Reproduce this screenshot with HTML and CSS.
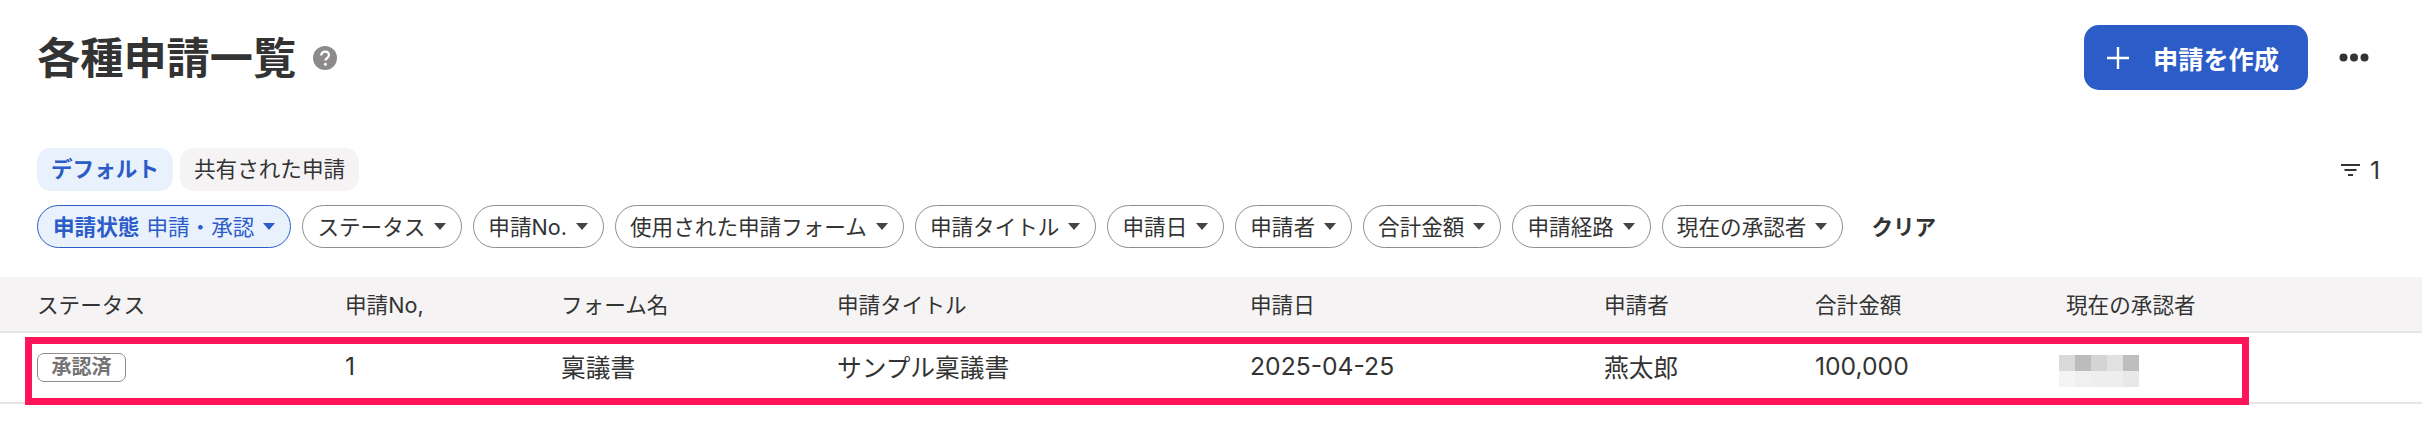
FILE: index.html
```html
<!DOCTYPE html>
<html lang="ja">
<head>
<meta charset="utf-8">
<title>各種申請一覧</title>
<link rel="stylesheet" href="styles.css">
</head>
<body>
<main class="page">
  <header class="top">
    <div class="title-wrap">
      <h1 class="title">各種申請一覧</h1>
      <svg class="help" viewBox="0 0 24 24" aria-hidden="true">
        <circle cx="12" cy="12" r="12" fill="#8c8a8b"/>
        <path d="M8.2 9.6c0-2.3 1.6-3.9 3.9-3.9 2.2 0 3.8 1.4 3.8 3.4 0 1.6-.8 2.4-2 3.2-1 .7-1.4 1.1-1.4 2.2" fill="none" stroke="#fff" stroke-width="2.3"/>
        <circle cx="12.4" cy="18.2" r="1.5" fill="#fff"/>
      </svg>
    </div>
    <div class="actions">
      <button class="create" type="button">
        <svg class="plus" viewBox="0 0 22 22" aria-hidden="true"><path d="M11 0v22M0 11h22" stroke="#fff" stroke-width="2.4"/></svg>
        <span>申請を作成</span>
      </button>
      <svg class="more" viewBox="0 0 30 9" aria-hidden="true">
        <circle cx="4.5" cy="4.5" r="4" fill="#333"/><circle cx="15" cy="4.5" r="4" fill="#333"/><circle cx="25.5" cy="4.5" r="4" fill="#333"/>
      </svg>
    </div>
  </header>

  <div class="tab-row">
    <div class="tabs">
      <span class="tab tab-active">デフォルト</span>
      <span class="tab">共有された申請</span>
    </div>
    <div class="count">
      <svg class="sort" viewBox="0 0 19 12" aria-hidden="true"><path d="M0 1h19M3.5 6h12M7 11h5" stroke="#333" stroke-width="2"/></svg>
      <span>1</span>
    </div>
  </div>

  <div class="filters">
    <span class="pill pill-active"><b>申請状態</b><span>申請・承認</span><i class="caret"></i></span>
    <span class="pill">ステータス<i class="caret"></i></span>
    <span class="pill">申請No.<i class="caret"></i></span>
    <span class="pill">使用された申請フォーム<i class="caret"></i></span>
    <span class="pill">申請タイトル<i class="caret"></i></span>
    <span class="pill">申請日<i class="caret"></i></span>
    <span class="pill">申請者<i class="caret"></i></span>
    <span class="pill">合計金額<i class="caret"></i></span>
    <span class="pill">申請経路<i class="caret"></i></span>
    <span class="pill">現在の承認者<i class="caret"></i></span>
    <span class="clear">クリア</span>
  </div>

  <section class="table">
    <div class="row head">
      <span>ステータス</span><span>申請No,</span><span>フォーム名</span><span>申請タイトル</span><span>申請日</span><span>申請者</span><span>合計金額</span><span>現在の承認者</span>
    </div>
    <div class="row body">
      <span><em class="badge">承認済</em></span><span>1</span><span>稟議書</span><span>サンプル稟議書</span><span>2025-04-25</span><span>燕太郎</span><span>100,000</span>
      <span class="mosaic"><i class="a"></i><i class="b"></i><i class="c"></i><i class="d"></i><i class="e"></i><i class="f"></i><i class="g"></i><i class="h"></i><i class="j"></i><i class="k"></i></span>
    </div>
    <div class="highlight"></div>
  </section>
</main>
</body>
</html>
```
FILE: styles.css
```css
* { box-sizing: border-box; }
html, body { margin: 0; background: #fff; }
body {
  font-family: Inter, "Noto Sans CJK JP", sans-serif;
  font-size: 21.6px;
  color: #333;
  width: 2422px;
  height: 430px;
  overflow: hidden;
}
.page { padding-top: 25px; }

.top {
  display: flex;
  justify-content: space-between;
  align-items: center;
  height: 65px;
  padding: 0 53px 0 37px;
}
.title-wrap { display: flex; align-items: center; gap: 17px; }
.title { margin: 0; font-size: 43.2px; line-height: 56px; font-weight: 700; color: #333; }
.help { width: 24px; height: 24px; }
.actions { display: flex; align-items: center; gap: 31px; }
.create {
  display: flex;
  align-items: center;
  gap: 24px;
  width: 224px;
  height: 65px;
  padding: 0 0 0 23px;
  border: 0;
  border-radius: 15px;
  background: #2b5cc8;
  color: #fff;
  font: 700 25.2px Inter, "Noto Sans CJK JP", sans-serif;
}
.plus { width: 22px; height: 22px; }
.more { width: 30px; height: 9px; }

.tab-row {
  display: flex;
  justify-content: space-between;
  align-items: center;
  margin-top: 58px;
  padding: 0 42px 0 37px;
}
.tabs { display: flex; gap: 7px; }
.tab {
  height: 43px;
  line-height: 43px;
  padding: 0 14px;
  border-radius: 14px;
  background: #f5f3f4;
}
.tab-active { background: #e9f1fd; color: #2b5cc8; font-weight: 700; }
.count { display: flex; align-items: center; gap: 10px; font-size: 24.7px; }
.sort { width: 19px; height: 12px; }

.filters {
  display: flex;
  align-items: center;
  gap: 11px;
  margin-top: 14px;
  padding-left: 37px;
}
.pill {
  display: flex;
  align-items: center;
  height: 43px;
  padding: 0 15px 2px 14px;
  border: 1px solid #8f8d8e;
  border-radius: 22px;
  white-space: nowrap;
}
.pill-active {
  gap: 7px;
  padding-left: 15px;
  border-color: #2b5cc8;
  background: #e9f1fd;
  color: #2b5cc8;
}
.pill-active b { font-weight: 700; }
.pill-active .caret { margin-left: 2px; border-top-color: #2b5cc8; }
.caret {
  width: 0;
  height: 0;
  margin: 2px 0 0 9px;
  border-left: 6px solid transparent;
  border-right: 6px solid transparent;
  border-top: 7px solid #444;
}
.clear { margin-left: 17px; padding-bottom: 2px; font-weight: 700; }

.table { position: relative; margin-top: 29px; }
.row {
  display: grid;
  grid-template-columns: 308px 216px 276px 413px 354px 211px 251px 1fr;
  align-items: center;
  padding-left: 37px;
  border-bottom: 2px solid #e6e6e6;
}
.head { height: 56px; padding-bottom: 2px; background: #f5f3f4; }
.body { height: 71px; padding-bottom: 3px; font-size: 24.7px; }
.badge {
  display: block;
  width: 89px;
  height: 29px;
  margin-top: 3px;
  line-height: 27px;
  text-align: center;
  border: 1px solid #8f8d8e;
  border-radius: 7px;
  font-style: normal;
  font-weight: 700;
  font-size: 20px;
  color: #757374;
}
.mosaic {
  display: grid;
  grid-template-columns: repeat(5, 16px);
  grid-auto-rows: 16px;
  width: 80px;
  margin: 10px 0 0 -7px;
}
.a { background: #dadada; }
.b { background: #bcbcbc; }
.c { background: #d4d4d4; }
.d { background: #e1e1e1; }
.e { background: #bebebe; }
.f { background: #f4f4f4; }
.g { background: #f0f0f0; }
.h { background: #eeeeee; }
.j { background: #eeeeee; }
.k { background: #e8e8e8; }
.highlight {
  position: absolute;
  left: 25px;
  top: 60px;
  width: 2224px;
  height: 68px;
  border: 7px solid #ff1459;
}
```
